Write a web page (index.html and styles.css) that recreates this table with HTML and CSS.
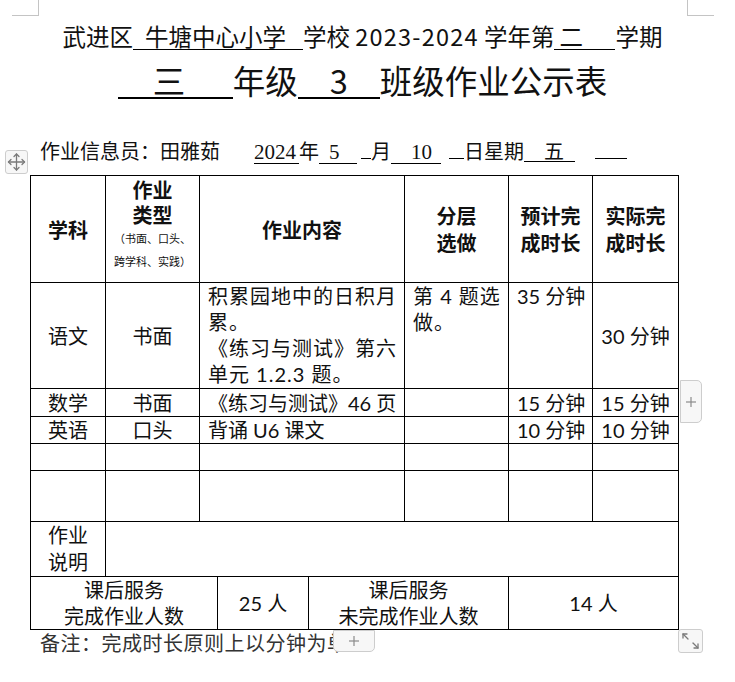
FILE: index.html
```html
<!DOCTYPE html>
<html lang="zh-CN">
<head>
<meta charset="utf-8">
<title>班级作业公示表</title>
<link rel="stylesheet" href="styles.css">
</head>
<body>
<div class="page">
  <div class="corner corner-tl"></div>
  <div class="corner corner-tr"></div>

  <h1 class="line1">武进区<span class="blank b-school">牛塘中心小学</span>学校 <span class="years">2023-2024</span> 学年第<span class="blank b-term">二</span>学期</h1>
  <h2 class="line2"><span class="blank2 b-grade">三</span>年级<span class="blank2 b-class">3</span>班级作业公示表</h2>

  <div class="info">
    <span class="name">作业信息员：田雅茹</span>
    <span class="u num w-year">2024</span>
    <span class="t">年</span>
    <span class="u num w38 pl10">5</span><span class="u w10 ml4"></span>
    <span class="t">月</span>
    <span class="u num w50 pl20">10</span><span class="u w15 ml8"></span>
    <span class="t">日星期</span>
    <span class="u w51 pl20">五</span><span class="u w32 ml20"></span>
  </div>

  <table class="grid">
    <colgroup>
      <col class="c1"><col class="c2"><col class="c3"><col class="c4"><col class="c5"><col class="c6"><col class="c7"><col class="c8">
    </colgroup>
    <tr class="h-head">
      <th>学科</th>
      <th class="type-cell">
        <div class="tl">作业</div>
        <div class="tl">类型</div>
        <div class="small">（书面、口头、</div>
        <div class="small">跨学科、实践）</div>
      </th>
      <th colspan="3">作业内容</th>
      <th>分层<br>选做</th>
      <th>预计完<br>成时长</th>
      <th>实际完<br>成时长</th>
    </tr>
    <tr class="h-yw">
      <td>语文</td>
      <td>书面</td>
      <td colspan="3" class="left top spaced">
        <div class="ln">积累园地中的日积月</div>
        <div class="ln">累。</div>
        <div class="ln">《练习与测试》第六</div>
        <div class="ln">单元 1.2.3 题。</div>
      </td>
      <td class="left top spaced">
        <div class="ln">第 4 题选</div>
        <div class="ln">做。</div>
      </td>
      <td class="top">35 分钟</td>
      <td>30 分钟</td>
    </tr>
    <tr class="h-sx">
      <td>数学</td>
      <td>书面</td>
      <td colspan="3" class="left">《练习与测试》46 页</td>
      <td></td>
      <td>15 分钟</td>
      <td>15 分钟</td>
    </tr>
    <tr class="h-yy">
      <td>英语</td>
      <td>口头</td>
      <td colspan="3" class="left">背诵 U6 课文</td>
      <td></td>
      <td>10 分钟</td>
      <td>10 分钟</td>
    </tr>
    <tr class="h-e1">
      <td></td><td></td><td colspan="3"></td><td></td><td></td><td></td>
    </tr>
    <tr class="h-e2">
      <td></td><td></td><td colspan="3"></td><td></td><td></td><td></td>
    </tr>
    <tr class="h-sm">
      <td class="lh27">作业<br>说明</td>
      <td colspan="7"></td>
    </tr>
    <tr class="h-ft">
      <td colspan="3">课后服务<br>完成作业人数</td>
      <td>25 人</td>
      <td colspan="2">课后服务<br>未完成作业人数</td>
      <td colspan="2">14 人</td>
    </tr>
  </table>

  <p class="note">备注：完成时长原则上以分钟为单</p>

  <div class="tool move">
    <svg width="21" height="22" viewBox="0 0 21 22">
      <g fill="none" stroke="#7a7a7a" stroke-width="1.3" stroke-linecap="round" stroke-linejoin="round">
        <line x1="10.5" y1="3" x2="10.5" y2="19"/>
        <line x1="2.5" y1="11" x2="18.5" y2="11"/>
        <polyline points="8,5.5 10.5,3 13,5.5"/>
        <polyline points="8,16.5 10.5,19 13,16.5"/>
        <polyline points="5,8.5 2.5,11 5,13.5"/>
        <polyline points="16,8.5 18.5,11 16,13.5"/>
      </g>
    </svg>
  </div>
  <div class="tool add-right">
    <svg width="12" height="12" viewBox="0 0 12 12">
      <g stroke="#8a8a8a" stroke-width="1.2"><line x1="6" y1="1" x2="6" y2="11"/><line x1="1" y1="6" x2="11" y2="6"/></g>
    </svg>
  </div>
  <div class="tool add-bottom">
    <svg width="12" height="12" viewBox="0 0 12 12">
      <g stroke="#8a8a8a" stroke-width="1.2"><line x1="6" y1="1" x2="6" y2="11"/><line x1="1" y1="6" x2="11" y2="6"/></g>
    </svg>
  </div>
  <div class="tool resize">
    <svg width="23" height="22" viewBox="0 0 23 22">
      <g fill="none" stroke="#7a7a7a" stroke-width="1.3" stroke-linecap="round" stroke-linejoin="round">
        <line x1="4" y1="4" x2="9" y2="9"/>
        <polyline points="4,8 4,4 8,4"/>
        <line x1="14" y1="13" x2="19" y2="18"/>
        <polyline points="15,18 19,18 19,14"/>
      </g>
    </svg>
  </div>
</div>
</body>
</html>
```

FILE: styles.css
```css
* { box-sizing: border-box; }

html, body {
  margin: 0;
  background: #ffffff;
}

body {
  color: #111111;
  font-family: "Noto Sans CJK SC", sans-serif;
}

.page {
  position: relative;
  width: 735px;
  height: 682px;
  overflow: hidden;
  padding: 21px 48px 0 38px;
}

.corner {
  position: absolute;
  top: 0;
  height: 16px;
  border: 0 solid #c4c4c4;
}
.corner-tl {
  left: 12px;
  width: 27px;
  border-right-width: 1px;
  border-bottom-width: 1px;
}
.corner-tr {
  left: 687px;
  width: 27px;
  border-left-width: 1px;
  border-bottom-width: 1px;
}

.line1 {
  margin: 0;
  font-size: 23.5px;
  line-height: 30px;
  font-weight: normal;
  text-align: center;
  white-space: nowrap;
}
.years { letter-spacing: 1.2px; }

.blank {
  display: inline-block;
  border-bottom: 1px solid #000;
  line-height: 25px;
  text-align: left;
}
.b-school { width: 170px; padding-left: 12px; }
.b-term { width: 61px; padding-left: 5px; }

.line2 {
  margin: 9px 0 0;
  font-size: 32.5px;
  line-height: 40px;
  font-weight: normal;
  text-align: center;
  white-space: nowrap;
}

.blank2 {
  display: inline-block;
  border-bottom: 2px solid #000;
  line-height: 35px;
  text-align: left;
}
.b-grade { width: 115px; padding-left: 35px; }
.b-class { width: 82px; text-align: center; }

.info {
  margin-top: 37px;
  padding-left: 2px;
  display: flex;
  align-items: baseline;
  font-size: 20px;
  line-height: 24px;
  white-space: nowrap;
}
.name { margin-right: 34px; }
.u {
  display: inline-block;
  border-bottom: 1px solid #000;
  line-height: 21px;
  height: 22px;
}
.num { font-family: "Liberation Serif", serif; font-size: 21px; }
.w-year { width: 45px; }
.w38 { width: 38px; }
.w10 { width: 10px; }
.w50 { width: 50px; }
.w15 { width: 15px; }
.w51 { width: 51px; }
.w32 { width: 32px; }
.pl10 { padding-left: 10px; }
.pl20 { padding-left: 20px; }
.ml4 { margin-left: 4px; }
.ml8 { margin-left: 8px; }
.ml20 { margin-left: 20px; }

.grid {
  margin-top: 11px;
  margin-left: -8px;
  border-collapse: collapse;
  table-layout: fixed;
  width: 649px;
  font-family: "Lato", "Noto Sans CJK SC", sans-serif;
}
.c1 { width: 75px; }
.c2 { width: 94px; }
.c3 { width: 18px; }
.c4 { width: 91px; }
.c5 { width: 96px; }
.c6 { width: 104px; }
.c7 { width: 84px; }
.c8 { width: 86px; }

.grid th,
.grid td {
  border: 1px solid #000;
  padding: 0 8px;
  text-align: center;
  vertical-align: middle;
  font-size: 20px;
  line-height: 26px;
  white-space: nowrap;
  overflow: hidden;
}
.grid th {
  font-weight: bold;
  line-height: 27px;
  font-family: "Noto Sans CJK SC", sans-serif;
}
.grid .type-cell {
  vertical-align: top;
  padding-top: 1px;
}
.tl { line-height: 25px; }
.small {
  font-size: 11px;
  line-height: 23px;
  font-weight: normal;
}
.grid td.left { text-align: left; }
.grid td.top { vertical-align: top; }
.spaced { letter-spacing: 1px; }
.grid td.lh27 { line-height: 27px; }

.h-head { height: 107px; }
.h-yw { height: 106px; }
.h-sx { height: 28px; }
.h-yy { height: 27px; }
.h-e1 { height: 27px; }
.h-e2 { height: 51px; }
.h-sm { height: 55px; }
.h-ft { height: 53px; }

.note {
  margin: 1px 0 0;
  padding-left: 2px;
  font-size: 20px;
  line-height: 24px;
  letter-spacing: 0.5px;
  color: #333;
  white-space: nowrap;
}

.tool {
  position: absolute;
  display: flex;
  align-items: center;
  justify-content: center;
  background: #f7f7f7;
  border: 1px solid #cdcdcd;
}
.move {
  left: 5px;
  top: 150px;
  width: 23px;
  height: 24px;
  border-radius: 3px;
}
.add-right {
  left: 680px;
  top: 380px;
  width: 22px;
  height: 43px;
  border-radius: 0 5px 5px 0;
}
.add-bottom {
  left: 333px;
  top: 630px;
  width: 42px;
  height: 22px;
  border-radius: 0 0 5px 5px;
}
.resize {
  left: 678px;
  top: 629px;
  width: 25px;
  height: 24px;
  border-radius: 3px;
}
```
